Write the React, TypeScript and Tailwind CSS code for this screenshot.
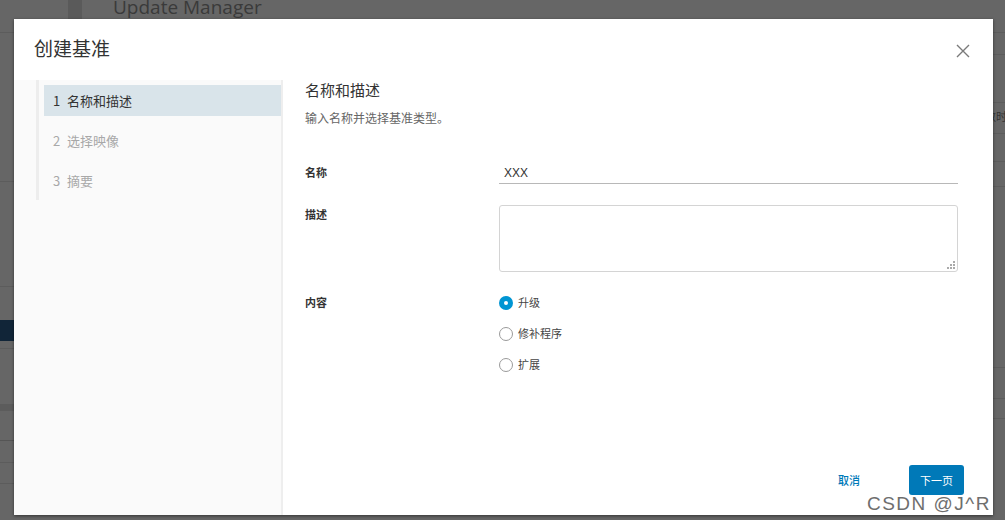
import React from "react";

const cjk = { fontFamily: '"Noto Sans CJK SC", "Noto Sans", sans-serif' };

function Radio({ checked, label }: { checked?: boolean; label: string }) {
  return (
    <div className="flex h-[31px] items-center">
      {checked ? (
        <span className="flex h-[14px] w-[14px] items-center justify-center rounded-full bg-[#0095d3]">
          <span className="h-[4px] w-[4px] rounded-full bg-white" />
        </span>
      ) : (
        <span className="h-[14px] w-[14px] rounded-full border border-[#9a9a9a] bg-white" />
      )}
      <span className="ml-[5px] text-[11px] text-[#444]">{label}</span>
    </div>
  );
}

function NavItem({ n, label, active }: { n: number; label: string; active?: boolean }) {
  return (
    <div
      className={
        "flex h-[31px] items-center pl-[9px] text-[13px] " +
        (active ? "bg-[#d9e4ea] text-[#333]" : "text-[#a8a8a8]")
      }
    >
      <span className="w-[14px]">{n}</span>
      <span>{label}</span>
    </div>
  );
}

export default function App() {
  return (
    <div className="relative h-[520px] w-[1005px] overflow-hidden bg-[#666]" style={cjk}>
      {/* background page */}
      <div className="flex h-[33px] items-start border-b border-[#5c5c5c]">
        <div className="ml-[68px] h-[19px] w-[14px] bg-[#5a5a5a]" />
        <span
          className="ml-[31px] -mt-[6px] text-[19px] leading-[26px] text-[#3a3a3a]"
          style={{ fontFamily: '"Open Sans", "Noto Sans", sans-serif' }}
        >
          Update Manager
        </span>
      </div>
      <div className="flex justify-between">
        <div className="flex w-[14px] flex-col">
          <div className="h-[149px] border-b border-[#5c5c5c]" />
          <div className="h-[105px] border-b border-[#5c5c5c]" />
          <div className="h-[33px]" />
          <div className="h-[21px] bg-[#112538]" />
          <div className="h-[8px] border-b border-[#5c5c5c]" />
          <div className="h-[62px] border-b-[7px] border-[#5c5c5c]" />
          <div className="h-[30px] border-b border-[#555]" />
          <div className="h-[22px] border-b border-[#5c5c5c]" />
          <div className="h-[21px] border-b border-[#5c5c5c]" />
        </div>
        <div className="flex w-[12px] flex-col">
          <div className="h-[22px] border-b border-[#5c5c5c]" />
          <div className="h-[48px] border-b border-[#5c5c5c]" />
          <div className="relative h-[31px] border-b border-[#5c5c5c]">
            <span className="absolute right-[-2px] top-[7px] text-[11px] leading-[12px] text-[#333] whitespace-nowrap">
              数时
            </span>
          </div>
          <div className="h-[28px] border-b border-[#5c5c5c]" />
          <div className="h-[25px] border-b border-[#5c5c5c]" />
          <div className="h-[181px] border-b border-[#5c5c5c]" />
          <div className="h-[31px] border-b border-[#5c5c5c]" />
          <div className="h-[20px] border-b border-[#5c5c5c]" />
        </div>
      </div>

      {/* modal */}
      <div className="absolute left-[14px] top-[19px] flex h-[496px] w-[979px] flex-col bg-white shadow-[0_1px_3px_rgba(0,0,0,0.5)]">
        <div className="flex h-[61px] shrink-0 items-center justify-between pl-[20px] pr-[23px]">
          <span className="-mt-[3px] text-[19px] text-[#333]">创建基准</span>
          <svg width="14" height="14" viewBox="0 0 14 14" className="mt-[2px]">
            <path d="M1 1 L13 13 M13 1 L1 13" stroke="#7a7a7a" strokeWidth="1.4" />
          </svg>
        </div>
        <div className="flex min-h-0 flex-1">
          <div className="w-[269px] shrink-0 border-r-2 border-[#eeeeee] bg-[#fafafa] pl-[22px]">
            <div className="flex flex-col gap-[9px] border-l-[3px] border-[#ededed] pb-[4px] pl-[5px] pt-[5px]">
              <NavItem n={1} label="名称和描述" active />
              <NavItem n={2} label="选择映像" />
              <NavItem n={3} label="摘要" />
            </div>
          </div>
          <div className="relative flex flex-1 flex-col pl-[22px] pr-[35px]">
            <div className="text-[15px] leading-[20px] text-[#333]">名称和描述</div>
            <div className="mt-[10px] text-[12px] leading-[16px] text-[#666]">输入名称并选择基准类型。</div>

            <div className="mt-[31px] flex items-start">
              <span className="mt-[7px] w-[194px] text-[11px] font-semibold text-[#333]">名称</span>
              <div className="flex h-[27px] flex-1 items-end border-b border-[#b8b8b8] pb-[3px] pl-[5px] text-[12px] leading-[14px] text-[#333]" style={{ fontFamily: '"Liberation Sans", sans-serif' }}>
                XXX
              </div>
            </div>

            <div className="mt-[21px] flex items-start">
              <span className="mt-[1px] w-[194px] text-[11px] font-semibold text-[#333]">描述</span>
              <div className="relative h-[67px] flex-1 rounded-[3px] border border-[#d4d4d4]">
                <svg width="8" height="8" viewBox="0 0 8 8" className="absolute bottom-[2px] right-[2px]">
                  <rect x="6" y="0" width="2" height="2" fill="#aaa" />
                  <rect x="3" y="3" width="2" height="2" fill="#aaa" />
                  <rect x="6" y="3" width="2" height="2" fill="#aaa" />
                  <rect x="0" y="6" width="2" height="2" fill="#aaa" />
                  <rect x="3" y="6" width="2" height="2" fill="#aaa" />
                  <rect x="6" y="6" width="2" height="2" fill="#aaa" />
                </svg>
              </div>
            </div>

            <div className="mt-[15px] flex items-start">
              <span className="mt-[7px] w-[194px] text-[11px] font-semibold text-[#333]">内容</span>
              <div className="flex flex-col">
                <Radio checked label="升级" />
                <Radio label="修补程序" />
                <Radio label="扩展" />
              </div>
            </div>

            <div className="mt-auto mb-[20px] flex items-center justify-end gap-[49px]">
              <span className="text-[11px] font-medium text-[#0079b8]">取消</span>
              <button className="mr-[-6px] h-[30px] w-[55px] rounded-[3px] bg-[#0079b8] text-[11px] text-white">
                下一页
              </button>
            </div>
          </div>
        </div>
      </div>

      {/* watermark */}
      <div
        className="absolute right-[14px] top-[492px] text-[19px] leading-[24px] tracking-[1.5px] text-[#6e6e6e]"
        style={{ fontFamily: '"Liberation Sans", sans-serif', textShadow: "0 0 2px #fff, 0 0 2px #fff" }}
      >
        CSDN @J^R
      </div>
    </div>
  );
}
